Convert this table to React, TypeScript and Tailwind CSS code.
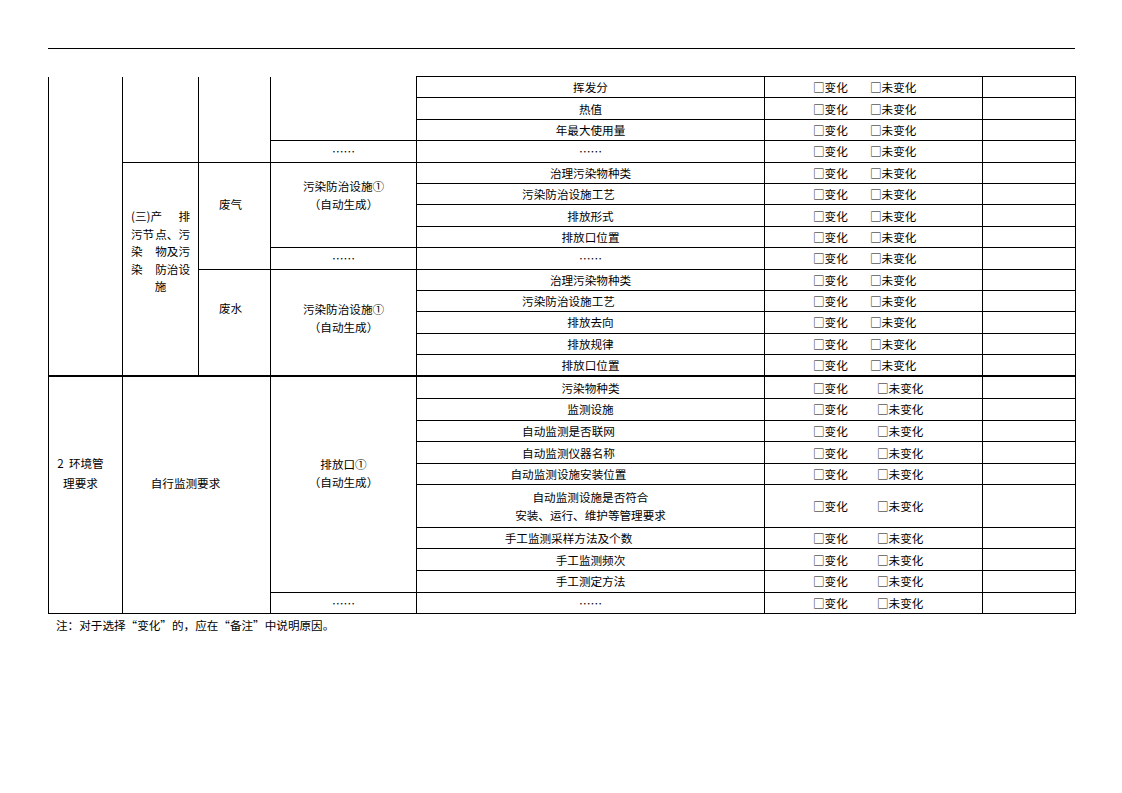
const cell = "border border-black p-0 align-middle";

function Check({ wide, top }: { wide?: boolean; top?: boolean }) {
  return (
    <td className={`${cell} ${top ? "border-t-2" : ""}`}>
      <div className="flex pl-[48px]">
        <span className={wide ? "w-[64px]" : "w-[57px]"}>□变化</span>
        <span>□未变化</span>
      </div>
    </td>
  );
}

function Row({
  text,
  shift,
  wide,
  top,
  children,
}: {
  text: string;
  shift?: boolean;
  wide?: boolean;
  top?: boolean;
  children?: React.ReactNode;
}) {
  const height = top ? "h-[22.6px]" : wide ? "h-[21.6px]" : "h-[21.4px]";
  return (
    <tr className={height}>
      {children}
      <td className={`${cell} text-center ${shift ? "pr-[44px]" : ""} ${top ? "border-t-2" : ""}`}>
        {text}
      </td>
      <Check wide={wide || top} top={top} />
      <td className={`${cell} ${top ? "border-t-2" : ""}`} />
    </tr>
  );
}

function Facility({ name }: { name: string }) {
  return (
    <>
      <div>{name}</div>
      <div>（自动生成）</div>
    </>
  );
}

export default function App() {
  return (
    <div
      lang="zh-CN"
      className="min-h-[793px] w-[1122px] bg-white pt-[48px] font-['Noto_Sans_CJK_SC',sans-serif] text-[11.6px] leading-[16px] text-black"
    >
      <div className="ml-[48px] h-px w-[1027px] bg-black" />

      <table className="ml-[48px] mt-[27px] w-[1027px] table-fixed border-collapse">
        <colgroup>
          <col className="w-[74px]" />
          <col className="w-[76px]" />
          <col className="w-[72px]" />
          <col className="w-[146px]" />
          <col className="w-[348px]" />
          <col className="w-[218px]" />
          <col className="w-[93px]" />
        </colgroup>
        <tbody>
          {/* 续上页 */}
          <Row text="挥发分">
            <td rowSpan={14} className={`${cell} border-t-0`} />
            <td rowSpan={4} className={`${cell} border-t-0`} />
            <td rowSpan={4} className={`${cell} border-t-0`} />
            <td rowSpan={3} className={`${cell} border-t-0`} />
          </Row>
          <Row text="热值" />
          <Row text="年最大使用量" />
          <Row text="……">
            <td className={`${cell} text-center`}>……</td>
          </Row>

          {/* 废气 */}
          <Row text="治理污染物种类">
            <td
              rowSpan={10}
              className={`${cell} whitespace-nowrap px-[8px] pb-[34px] leading-[17.5px]`}
            >
              <div className="flex justify-between">
                <span>(三)产</span>
                <span>排</span>
              </div>
              <div className="flex justify-between">
                <span>污节</span>
                <span>点、污</span>
              </div>
              <div className="flex justify-between">
                <span>染</span>
                <span>物及污</span>
              </div>
              <div className="flex justify-between">
                <span>染</span>
                <span>防治设</span>
              </div>
              <div className="text-center">施</div>
            </td>
            <td rowSpan={5} className={`${cell} pb-[23px] pr-[8px] text-center`}>
              废气
            </td>
            <td rowSpan={4} className={`${cell} pb-[19px] text-center leading-[18px]`}>
              <Facility name="污染防治设施①" />
            </td>
          </Row>
          <Row text="污染防治设施工艺" shift />
          <Row text="排放形式" />
          <Row text="排放口位置" />
          <Row text="……">
            <td className={`${cell} text-center`}>……</td>
          </Row>

          {/* 废水 */}
          <Row text="治理污染物种类">
            <td rowSpan={5} className={`${cell} pb-[28px] pr-[8px] text-center`}>
              废水
            </td>
            <td rowSpan={5} className={`${cell} pb-[8px] text-center leading-[18px]`}>
              <Facility name="污染防治设施①" />
            </td>
          </Row>
          <Row text="污染防治设施工艺" shift />
          <Row text="排放去向" />
          <Row text="排放规律" />
          <Row text="排放口位置" />

          {/* 2 环境管理要求 */}
          <Row text="污染物种类" top>
            <td
              rowSpan={10}
              className={`${cell} border-t-2 pb-[44px] pr-[10px] text-center leading-[20px]`}
            >
              <div>2&nbsp;&nbsp;环境管</div>
              <div>理要求</div>
            </td>
            <td
              colSpan={2}
              rowSpan={10}
              className={`${cell} border-t-2 pb-[24px] pr-[22px] text-center`}
            >
              自行监测要求
            </td>
            <td rowSpan={9} className={`${cell} border-t-2 pb-[22px] text-center leading-[18px]`}>
              <Facility name="排放口①" />
            </td>
          </Row>
          <Row text="监测设施" wide />
          <Row text="自动监测是否联网" shift wide />
          <Row text="自动监测仪器名称" shift wide />
          <Row text="自动监测设施安装位置" shift wide />
          <tr className="h-[42.4px]">
            <td className={`${cell} text-center leading-[18px]`}>
              <div>自动监测设施是否符合</div>
              <div>安装、运行、维护等管理要求</div>
            </td>
            <Check wide />
            <td className={cell} />
          </tr>
          <Row text="手工监测采样方法及个数" shift wide />
          <Row text="手工监测频次" wide />
          <Row text="手工测定方法" wide />
          <Row text="……" wide>
            <td className={`${cell} text-center`}>……</td>
          </Row>
        </tbody>
      </table>

      <p className="ml-[56px] mt-[3px]">注：对于选择“变化”的，应在“备注”中说明原因。</p>
    </div>
  );
}
